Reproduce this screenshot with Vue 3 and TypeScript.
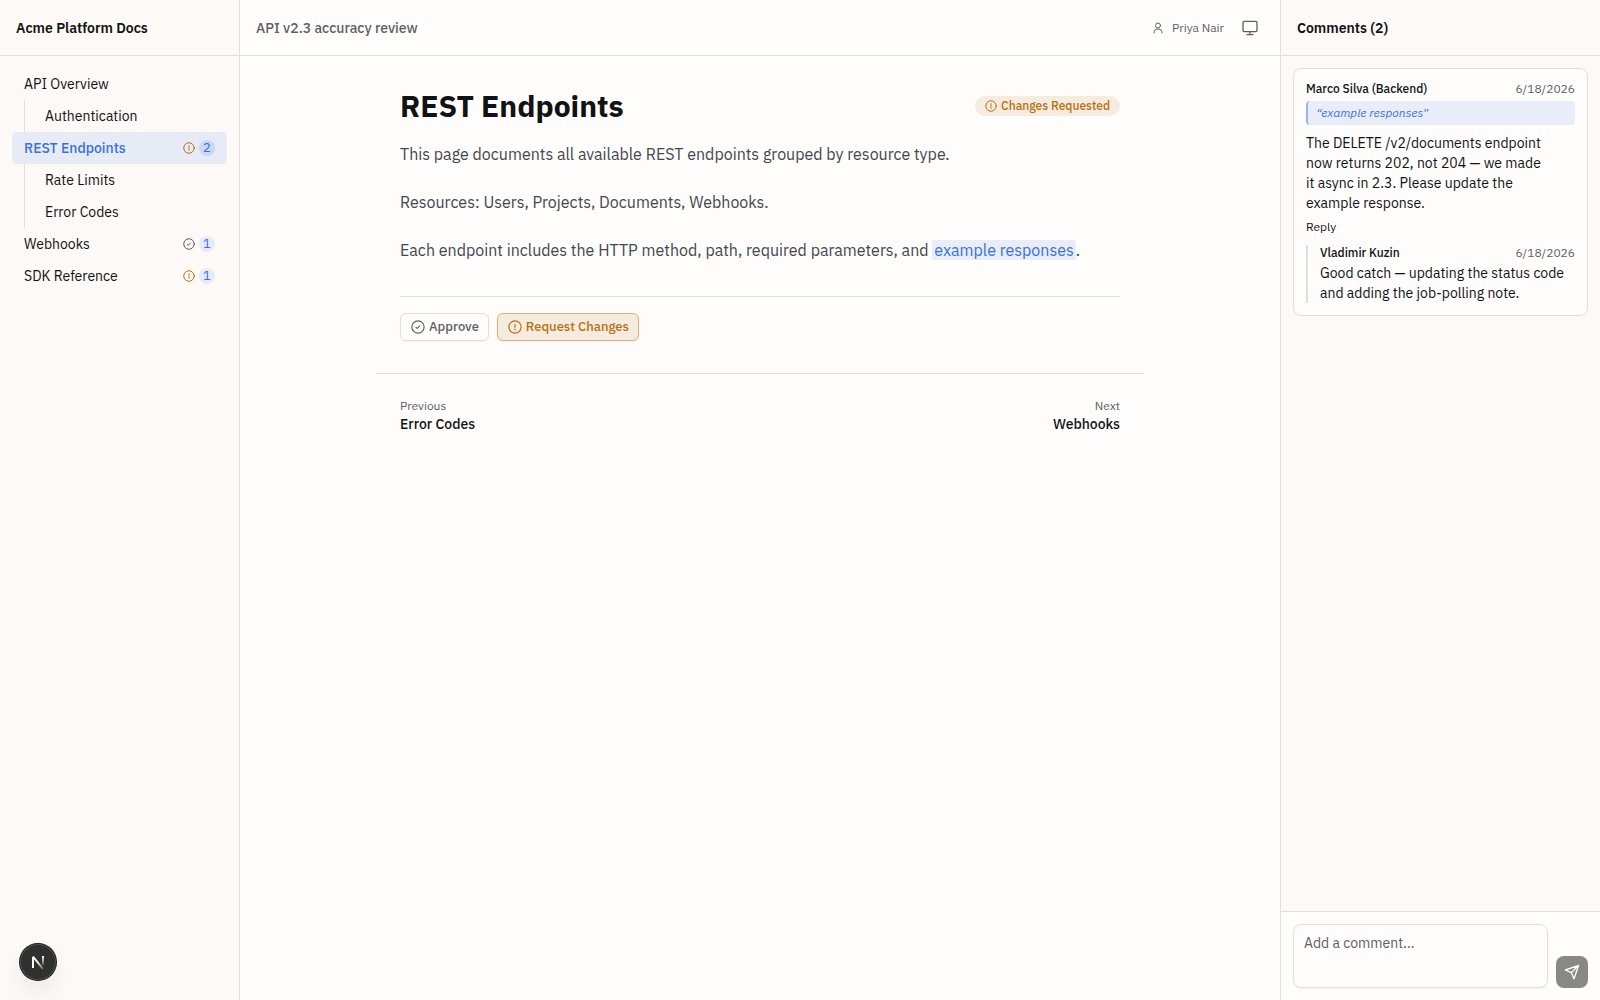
<script setup lang="ts">
import { ref } from 'vue'

type Status = 'approved' | 'changes'

interface Page {
  title: string
  child?: boolean
  active?: boolean
  status?: Status
  count?: number
}

const pages: Page[] = [
  { title: 'API Overview' },
  { title: 'Authentication', child: true },
  { title: 'REST Endpoints', active: true, status: 'changes', count: 2 },
  { title: 'Rate Limits', child: true },
  { title: 'Error Codes', child: true },
  { title: 'Webhooks', status: 'approved', count: 1 },
  { title: 'SDK Reference', status: 'changes', count: 1 },
]

const draft = ref('')
</script>

<template>
  <div class="app">
    <aside class="sidebar">
      <header class="bar bar-strong">Acme Platform Docs</header>
      <nav class="pages" aria-label="Pages">
        <a
          v-for="page in pages"
          :key="page.title"
          href="#"
          class="page"
          :class="{ child: page.child, active: page.active }"
        >
          <span class="page-title">{{ page.title }}</span>
          <svg v-if="page.status" class="icon icon-sm" :class="page.status" viewBox="0 0 24 24" aria-hidden="true">
            <circle cx="12" cy="12" r="10.5" />
            <path v-if="page.status === 'approved'" d="M8.5 12.5 10.5 14.5 15 10" />
            <path v-else d="M12 7.5v5M12 15v1.5" />
          </svg>
          <span v-if="page.count" class="count">{{ page.count }}</span>
        </a>
      </nav>
    </aside>

    <main class="main">
      <header class="bar topbar">
        <span class="review-name">API v2.3 accuracy review</span>
        <span class="user">
          <svg class="icon icon-sm" viewBox="0 0 24 24" aria-hidden="true">
            <circle cx="12" cy="7" r="5" />
            <path d="M4 22c0-5 2-8 8-8s8 3 8 8" />
          </svg>
          Priya Nair
        </span>
        <button class="theme" type="button" aria-label="Theme">
          <svg class="icon icon-md" viewBox="0 0 24 24" aria-hidden="true">
            <rect x="1.5" y="2" width="21" height="15.5" rx="2" />
            <path d="M12 17.5V22M7.5 22h9" />
          </svg>
        </button>
      </header>

      <article class="article">
        <div class="title-row">
          <h1>REST Endpoints</h1>
          <span class="status">
            <svg class="icon icon-sm" viewBox="0 0 24 24" aria-hidden="true">
              <circle cx="12" cy="12" r="10.5" />
              <path d="M12 7.5v5M12 15v1.5" />
            </svg>
            Changes Requested
          </span>
        </div>
        <div class="body">
          <p>This page documents all available REST endpoints grouped by resource type.</p>
          <p>Resources: Users, Projects, Documents, Webhooks.</p>
          <p>Each endpoint includes the HTTP method, path, required parameters, and <mark>example responses</mark>.</p>
        </div>
        <div class="actions">
          <button class="action" type="button">
            <svg class="icon icon-btn" viewBox="0 0 24 24" aria-hidden="true">
              <circle cx="12" cy="12" r="10.5" />
              <path d="M8.5 12.5 10.5 14.5 15 10" />
            </svg>
            Approve
          </button>
          <button class="action requested" type="button">
            <svg class="icon icon-btn" viewBox="0 0 24 24" aria-hidden="true">
              <circle cx="12" cy="12" r="10.5" />
              <path d="M12 7.5v5M12 15.5v1" />
            </svg>
            Request Changes
          </button>
        </div>
      </article>

      <nav class="pager" aria-label="Adjacent pages">
        <a href="#"><small>Previous</small>Error Codes</a>
        <a href="#" class="next"><small>Next</small>Webhooks</a>
      </nav>
    </main>

    <aside class="comments">
      <header class="bar bar-strong">Comments (2)</header>
      <div class="thread-list">
        <section class="card">
          <div class="meta"><strong>Marco Silva (Backend)</strong><time>6/18/2026</time></div>
          <blockquote>“example responses”</blockquote>
          <p class="message">The DELETE /v2/documents endpoint<br />now returns 202, not 204 — we made<br />it async in 2.3. Please update the<br />example response.</p>
          <button class="reply-button" type="button">Reply</button>
          <div class="reply">
            <div class="meta"><strong>Vladimir Kuzin</strong><time>6/18/2026</time></div>
            <p>Good catch — updating the status code<br />and adding the job-polling note.</p>
          </div>
        </section>
      </div>
      <form class="composer" @submit.prevent>
        <textarea v-model="draft" aria-label="Comment" placeholder="Add a comment..."></textarea>
        <button class="send" type="submit" aria-label="Send" :disabled="!draft">
          <svg class="icon icon-md" viewBox="0 0 24 24" aria-hidden="true">
            <path d="M22 2 15 22 11 13 2 9ZM22 2 11 13" />
          </svg>
        </button>
      </form>
    </aside>

    <button class="dev-badge" type="button" aria-label="Developer tools">
      <svg viewBox="0 0 36 36" aria-hidden="true">
        <defs>
          <linearGradient id="stem" x1="0" y1="12" x2="0" y2="22" gradientUnits="userSpaceOnUse">
            <stop offset="0" stop-color="#fff" />
            <stop offset="1" stop-color="#fff" stop-opacity="0.1" />
          </linearGradient>
          <linearGradient id="slash" x1="18" y1="18" x2="24" y2="25" gradientUnits="userSpaceOnUse">
            <stop offset="0" stop-color="#fff" />
            <stop offset="1" stop-color="#fff" stop-opacity="0.2" />
          </linearGradient>
        </defs>
        <path d="M13 24V13" stroke="#fff" />
        <path d="M13 12.5 23 25" stroke="url(#slash)" />
        <rect x="22" y="12" width="2" height="9" fill="url(#stem)" />
      </svg>
    </button>
  </div>
</template>

<style>
body {
  margin: 0;
  background: #fffdfc;
}
</style>

<style scoped>
.app {
  --bg: #fffdfc;
  --panel: #fdf9f6;
  --line: #e0dfdd;
  --text: #111213;
  --muted: #5d6063;
  --blue: #3871e0;
  --amber: #b9700f;
  display: grid;
  grid-template-columns: 240px minmax(0, 1fr) 320px;
  min-height: 100vh;
  background: var(--bg);
  color: var(--text);
  font-family: 'IBM Plex Sans', Roboto, sans-serif;
  font-size: 14px;
  line-height: 20px;
}

.app * {
  box-sizing: border-box;
}

p,
h1,
blockquote {
  margin: 0;
}

a {
  color: inherit;
  text-decoration: none;
}

button,
textarea {
  font: inherit;
  color: inherit;
}

button {
  padding: 0;
  border: 0;
  background: none;
  cursor: pointer;
}

.icon {
  flex: none;
  fill: none;
  stroke: currentColor;
  stroke-width: 2;
  stroke-linecap: round;
  stroke-linejoin: round;
}

.icon-sm {
  width: 12px;
  height: 12px;
}

.icon-btn {
  width: 14px;
  height: 14px;
}

.icon-md {
  width: 16px;
  height: 16px;
}

.bar {
  display: flex;
  align-items: center;
  height: 56px;
  padding: 0 16px;
  border-bottom: 1px solid var(--line);
}

.bar-strong {
  font-weight: 600;
}

.sidebar {
  border-right: 1px solid var(--line);
  background: var(--panel);
}

.pages {
  padding: 12px;
}

.page {
  display: flex;
  align-items: center;
  gap: 4px;
  height: 32px;
  padding: 0 12px;
  border-radius: 4px;
}

.page-title {
  flex: 1;
}

.child {
  margin-left: 12px;
  padding-left: 20px;
  border-left: 1px solid var(--line);
  border-radius: 0;
}

.active {
  background: #e6ebf6;
  color: var(--blue);
  font-weight: 500;
}

.approved {
  color: var(--muted);
}

.changes {
  color: var(--amber);
}

.count {
  width: 16px;
  border-radius: 8px;
  background: #e6ebf6;
  color: var(--blue);
  font-size: 13px;
  font-weight: 400;
  line-height: 16px;
  text-align: center;
}

.active .count {
  background: #cbd8f2;
}

.topbar {
  color: var(--muted);
}

.review-name {
  flex: 1;
  font-weight: 500;
}

.user {
  display: flex;
  align-items: center;
  gap: 8px;
  font-size: 12px;
  line-height: 16px;
}

.theme {
  display: grid;
  place-items: center;
  width: 32px;
  height: 32px;
  margin-left: 10px;
  margin-right: -2px;
}

.article {
  max-width: 768px;
  margin: 0 auto;
  padding: 32px 24px;
}

.title-row {
  display: flex;
  align-items: center;
  justify-content: space-between;
  margin-bottom: 16px;
}

h1 {
  font-size: 30px;
  font-weight: 700;
  line-height: 36px;
}

.status {
  display: flex;
  align-items: center;
  gap: 4px;
  padding: 2px 10px;
  border-radius: 10px;
  background: #f5ecdf;
  color: var(--amber);
  font-size: 12px;
  font-weight: 500;
  line-height: 16px;
}

.body {
  display: flex;
  flex-direction: column;
  gap: 20px;
  margin-bottom: 32px;
  color: #43474d;
  font-size: 16px;
  line-height: 28px;
}

mark {
  padding: 0 2px;
  border-radius: 3px;
  background: #e8edf9;
  color: var(--blue);
}

.actions {
  display: flex;
  gap: 8px;
  padding-top: 16px;
  border-top: 1px solid var(--line);
}

.action {
  display: flex;
  align-items: center;
  gap: 4px;
  height: 28px;
  padding: 0 9px 0 10px;
  border: 1px solid var(--line);
  border-radius: 6px;
  color: var(--muted);
  font-size: 13px;
  font-weight: 500;
  box-shadow: 0 1px 2px rgb(0 0 0 / 5%);
}

.requested {
  border-color: #dcae78;
  background: #f5ecdf;
  color: var(--amber);
}

.pager {
  display: flex;
  justify-content: space-between;
  max-width: 768px;
  margin: 0 auto;
  padding: 24px;
  border-top: 1px solid var(--line);
  font-weight: 500;
}

.pager small {
  display: block;
  color: var(--muted);
  font-size: 12px;
  font-weight: 400;
  line-height: 16px;
}

.next {
  text-align: right;
}

.comments {
  display: flex;
  flex-direction: column;
  border-left: 1px solid var(--line);
  background: var(--panel);
}

.thread-list {
  flex: 1;
  padding: 12px;
}

.card {
  padding: 12px;
  border: 1px solid var(--line);
  border-radius: 8px;
  background: var(--bg);
}

.meta {
  display: flex;
  justify-content: space-between;
  font-size: 12px;
  line-height: 16px;
}

.meta strong {
  font-weight: 500;
}

.meta time {
  color: var(--muted);
}

blockquote {
  margin: 4px 0 8px;
  padding: 4px 8px;
  border-left: 2px solid #9bb6ee;
  border-radius: 4px;
  background: #e8edf9;
  color: var(--blue);
  font-size: 12px;
  font-style: italic;
  line-height: 16px;
}

.reply-button {
  display: block;
  margin: 6px 0 10px;
  font-size: 12px;
  line-height: 16px;
}

.reply {
  padding-left: 12px;
  border-left: 2px solid var(--line);
}

.reply p {
  padding-top: 2px;
}

.composer {
  display: flex;
  align-items: flex-end;
  gap: 8px;
  padding: 12px;
  border-top: 1px solid var(--line);
  background: var(--bg);
}

textarea {
  flex: 1;
  min-width: 0;
  height: 64px;
  padding: 8px 10px;
  border: 1px solid var(--line);
  border-radius: 8px;
  background: var(--bg);
  box-shadow: 0 1px 2px rgb(0 0 0 / 5%);
  resize: none;
}

textarea::placeholder {
  color: var(--muted);
}

.send {
  display: grid;
  place-items: center;
  width: 32px;
  height: 32px;
  border-radius: 8px;
  background: #888887;
  color: #fff;
}

.dev-badge {
  position: fixed;
  bottom: 20px;
  left: 20px;
  width: 36px;
  height: 36px;
  border-radius: 50%;
  background: #30302e;
  box-shadow: 0 0 0 1px #171a1e, inset 0 0 0 1px #4b4e52, 0 12px 24px rgb(0 0 0 / 7%);
}

.dev-badge svg {
  display: block;
  fill: none;
  stroke-width: 2;
}
</style>
